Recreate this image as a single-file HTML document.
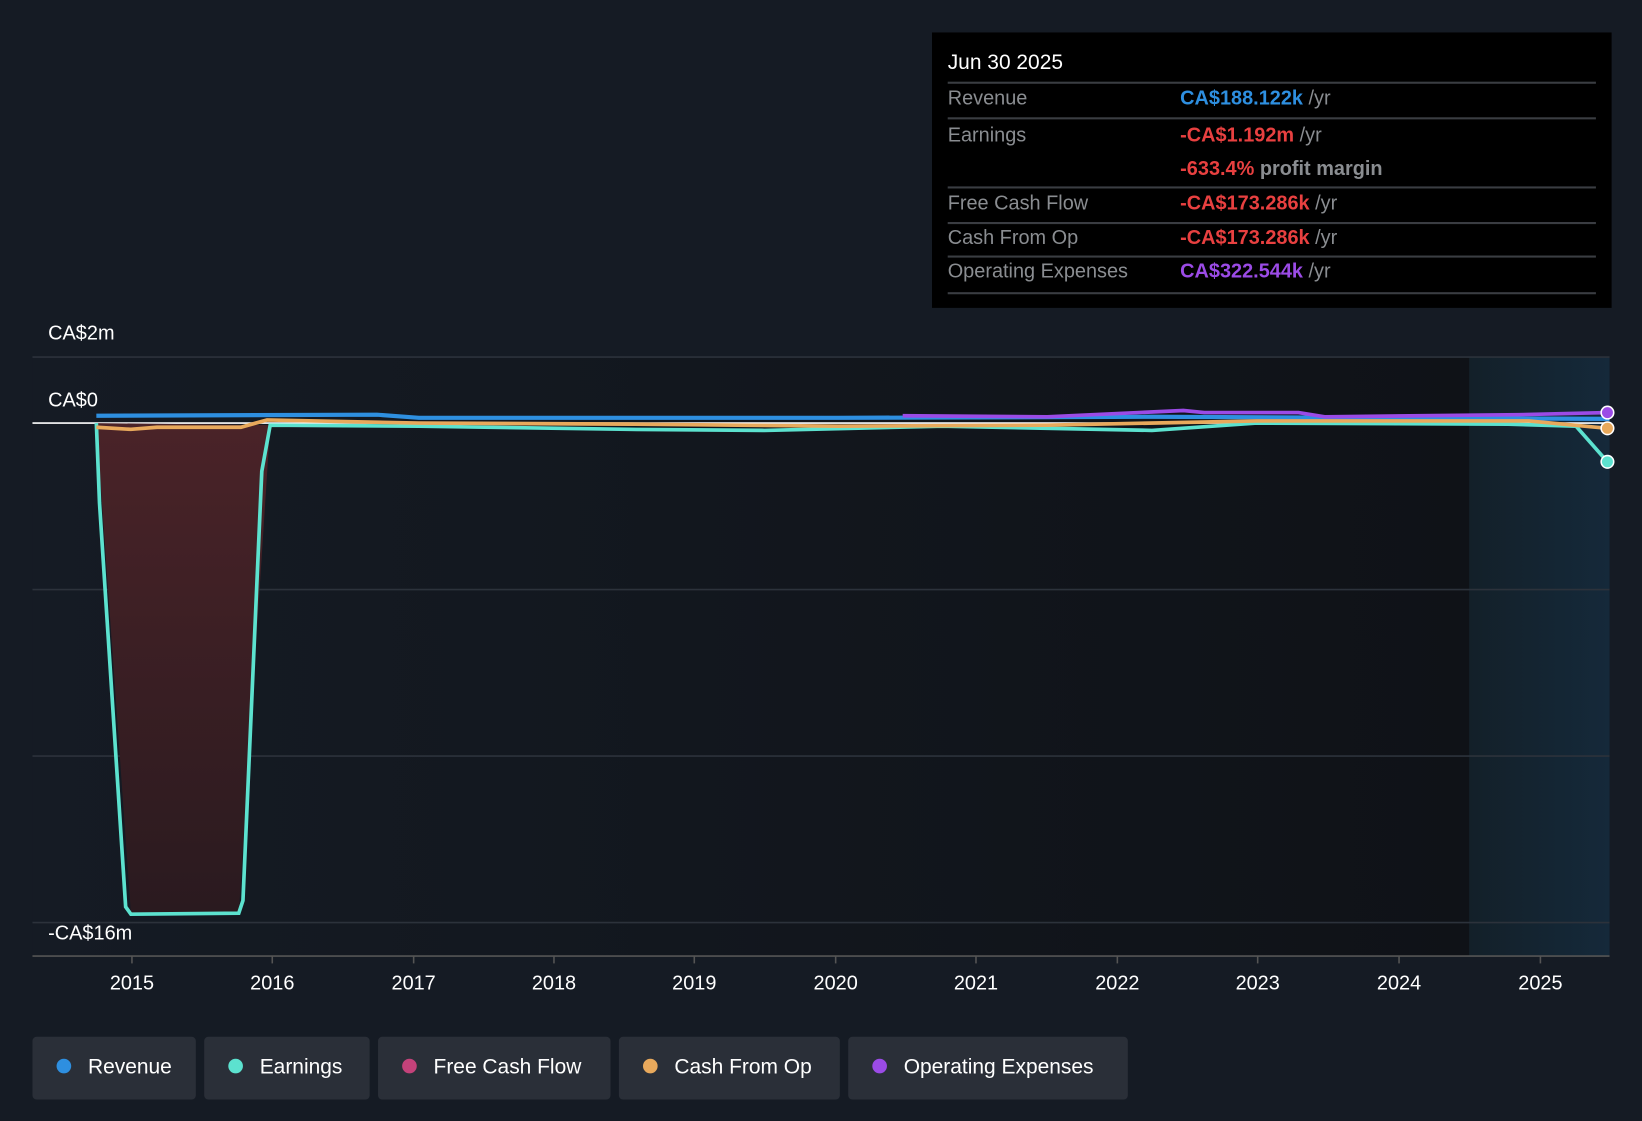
<!DOCTYPE html>
<html><head><meta charset="utf-8"><style>
html,body{margin:0;padding:0;background:#151b24;width:1642px;height:1120px;overflow:hidden}
#w{position:absolute;left:0;top:0;width:1568px;height:1070px;transform:scale(1.04719);transform-origin:0 0;font-family:"Liberation Sans",sans-serif}
.t{position:absolute;color:#fff;font-size:19px}
#tip{position:absolute;left:890px;top:31px;width:649px;height:263px;background:#000}
.row{position:absolute;left:15px;width:619px;border-top:2px solid #3a3d42;font-size:19px;color:#8a8d91}
.row span{position:absolute;left:222px;white-space:nowrap}
.leg{position:absolute;top:990px;height:60px;background:#2a2f38;border-radius:4px;color:#fff;font-size:20px;line-height:58px;box-sizing:border-box;padding-left:53px}
.leg i{position:absolute;left:23px;top:21px;width:14px;height:14px;border-radius:50%}
</style></head><body><div id="w">
<svg width="1568" height="1070" style="position:absolute;left:0;top:0">
<defs><linearGradient id="g" x1="0" x2="1"><stop offset="0" stop-color="#151b24"/><stop offset="1" stop-color="#0f1217"/></linearGradient>
<linearGradient id="f" x1="0" x2="1"><stop offset="0" stop-color="#132029"/><stop offset="1" stop-color="#15293a"/></linearGradient>
<linearGradient id="r" x1="0" y1="0" x2="0" y2="1"><stop offset="0" stop-color="#4a2328"/><stop offset="1" stop-color="#2a1a1f"/></linearGradient></defs>
<rect x="31" y="341" width="1372" height="572" fill="url(#g)"/>
<rect x="1403" y="341" width="134" height="572" fill="url(#f)"/>
<g stroke="#2c323b" stroke-width="1.5"><line x1="31" y1="341" x2="1537" y2="341"/><line x1="31" y1="563" x2="1537" y2="563"/><line x1="31" y1="722" x2="1537" y2="722"/><line x1="31" y1="881" x2="1537" y2="881"/><line x1="31" y1="913" x2="1537" y2="913" stroke="#555"/></g>
<line x1="31" y1="404" x2="1537" y2="404" stroke="#fff" stroke-width="1.5"/>
<path d="M92 404 L125 872 L228 872 L258 406 Z" fill="url(#r)"/>
<path d="M92 397 L360 396 L400 399 L800 399 L1100 398 L1537 400" stroke="#2e8fe0" stroke-width="4" fill="none"/>
<path d="M92 404 L95 480 L120 866 L125 873 L228 872 L232 860 L250 450 L258 406 L400 407 L600 410 L730 411 L900 407 L1100 411 L1200 404 L1440 405 L1505 407 L1535 441" stroke="#5ce2cf" stroke-width="3.5" fill="none"/>
<path d="M92 408 L125 410 L150 408 L230 408 L255 401 L400 404 L600 405 L800 407 L1000 406 L1200 402 L1460 402 L1535 409" stroke="#e8a95c" stroke-width="3.5" fill="none"/>
<path d="M862 397 L1000 398 L1130 392 L1150 394 L1240 394 L1265 398 L1450 396 L1535 394" stroke="#9b4be6" stroke-width="3.5" fill="none"/>
<circle cx="1535" cy="394" r="6" fill="#9b4be6" stroke="#fff" stroke-width="1.5"/>
<circle cx="1535" cy="409" r="6" fill="#e8a95c" stroke="#fff" stroke-width="1.5"/>
<circle cx="1535" cy="441" r="6" fill="#5ce2cf" stroke="#fff" stroke-width="1.5"/>
<g stroke="#555" stroke-width="1.5"><line x1="126" y1="913" x2="126" y2="920"/><line x1="260" y1="913" x2="260" y2="920"/><line x1="395" y1="913" x2="395" y2="920"/><line x1="529" y1="913" x2="529" y2="920"/><line x1="663" y1="913" x2="663" y2="920"/><line x1="798" y1="913" x2="798" y2="920"/><line x1="932" y1="913" x2="932" y2="920"/><line x1="1067" y1="913" x2="1067" y2="920"/><line x1="1201" y1="913" x2="1201" y2="920"/><line x1="1336" y1="913" x2="1336" y2="920"/><line x1="1471" y1="913" x2="1471" y2="920"/></g>
<g fill="#fff" font-size="19" text-anchor="middle" font-family="Liberation Sans,sans-serif"><text x="126" y="945">2015</text><text x="260" y="945">2016</text><text x="395" y="945">2017</text><text x="529" y="945">2018</text><text x="663" y="945">2019</text><text x="798" y="945">2020</text><text x="932" y="945">2021</text><text x="1067" y="945">2022</text><text x="1201" y="945">2023</text><text x="1336" y="945">2024</text><text x="1471" y="945">2025</text></g>
</svg>
<div class="t" style="left:46px;top:308px">CA$2m</div>
<div class="t" style="left:46px;top:372px">CA$0</div>
<div class="t" style="left:46px;top:881px">-CA$16m</div>
<div id="tip">
<div style="position:absolute;left:15px;top:18px;color:#fff;font-size:20px">Jun 30 2025</div>
<div class="row" style="top:47px;height:32px;line-height:30px">Revenue<span><b style="color:#2e8fe0;font-weight:bold">CA$188.122k</b> /yr</span></div>
<div class="row" style="top:81px;height:66px;line-height:32px">Earnings<span><b style="color:#e84040">-CA$1.192m</b> /yr<br><b style="color:#e84040">-633.4%</b> <b>profit margin</b></span></div>
<div class="row" style="top:147px;height:34px;line-height:30px">Free Cash Flow<span><b style="color:#e84040">-CA$173.286k</b> /yr</span></div>
<div class="row" style="top:181px;height:32px;line-height:28px">Cash From Op<span><b style="color:#e84040">-CA$173.286k</b> /yr</span></div>
<div class="row" style="top:213px;height:33px;line-height:28px;border-bottom:2px solid #3a3d42">Operating Expenses<span><b style="color:#9b4be6">CA$322.544k</b> /yr</span></div>
</div>
<div class="leg" style="left:31px;width:156px"><i style="background:#2e8fe0"></i>Revenue</div>
<div class="leg" style="left:195px;width:158px"><i style="background:#5ce2cf"></i>Earnings</div>
<div class="leg" style="left:361px;width:222px"><i style="background:#c4427a"></i>Free Cash Flow</div>
<div class="leg" style="left:591px;width:211px"><i style="background:#e8a95c"></i>Cash From Op</div>
<div class="leg" style="left:810px;width:267px"><i style="background:#9b4be6"></i>Operating Expenses</div>
</div></body></html>
